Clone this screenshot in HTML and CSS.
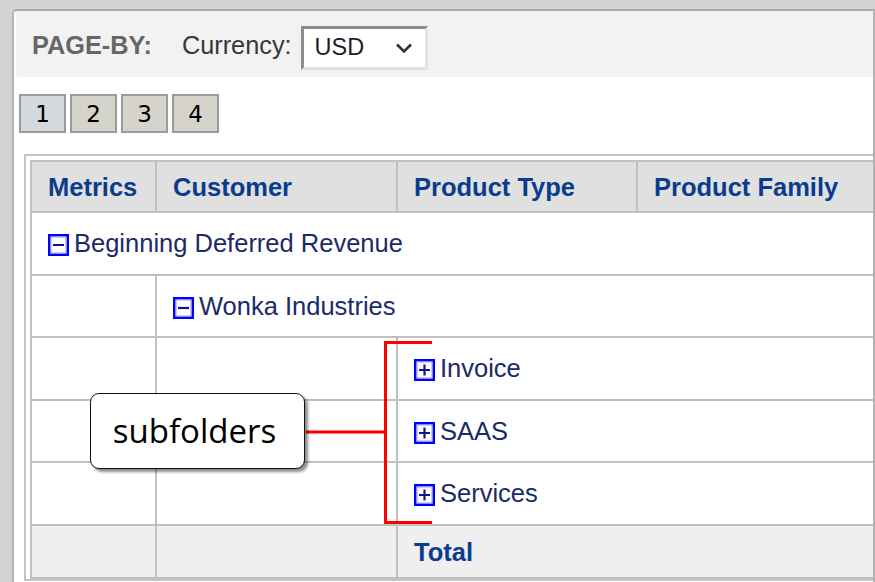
FILE: index.html
```html
<!DOCTYPE html>
<html>
<head>
<meta charset="utf-8">
<link rel="stylesheet" href="styles.css">
</head>
<body>
<div class="frame">
  <div class="pageby">
    <span class="pb-label">PAGE-BY:</span>
    <span class="pb-field">Currency:</span>
    <div class="select">
      <span class="select-value">USD</span>
      <svg class="chev" width="18" height="12" viewBox="0 0 18 12"><path d="M2 2.5 L9 9.5 L16 2.5" fill="none" stroke="#333" stroke-width="2.6"/></svg>
    </div>
  </div>

  <div class="pages">
    <span class="page page-active">1</span>
    <span class="page">2</span>
    <span class="page">3</span>
    <span class="page">4</span>
  </div>

  <div class="grid-wrap">
    <table class="grid">
      <thead>
        <tr class="r-head">
          <th class="c-metrics">Metrics</th>
          <th class="c-customer">Customer</th>
          <th class="c-ptype">Product Type</th>
          <th class="c-pfam">Product Family</th>
        </tr>
      </thead>
      <tbody>
        <tr class="r-a">
          <td colspan="4"><svg class="tog" width="21" height="22" viewBox="0 0 21 22"><rect x="1.25" y="1.25" width="18.5" height="19.5" fill="#fff" stroke="#0000ff" stroke-width="2.5"/><rect x="3" y="3" width="15" height="16" fill="none" stroke="#9a9aff" stroke-width="1"/><path d="M5 11 H16" stroke="#14148c" stroke-width="2.2"/></svg>Beginning Deferred Revenue</td>
        </tr>
        <tr class="r-b">
          <td></td>
          <td colspan="3"><svg class="tog" width="21" height="22" viewBox="0 0 21 22"><rect x="1.25" y="1.25" width="18.5" height="19.5" fill="#fff" stroke="#0000ff" stroke-width="2.5"/><rect x="3" y="3" width="15" height="16" fill="none" stroke="#9a9aff" stroke-width="1"/><path d="M5 11 H16" stroke="#14148c" stroke-width="2.2"/></svg>Wonka Industries</td>
        </tr>
        <tr class="r-a">
          <td></td><td></td>
          <td colspan="2"><svg class="tog" width="21" height="22" viewBox="0 0 21 22"><rect x="1.25" y="1.25" width="18.5" height="19.5" fill="#fff" stroke="#0000ff" stroke-width="2.5"/><rect x="3" y="3" width="15" height="16" fill="none" stroke="#9a9aff" stroke-width="1"/><path d="M5 11 H16 M10.5 5.5 V16.5" stroke="#14148c" stroke-width="2.2"/></svg>Invoice</td>
        </tr>
        <tr class="r-b">
          <td></td><td></td>
          <td colspan="2"><svg class="tog" width="21" height="22" viewBox="0 0 21 22"><rect x="1.25" y="1.25" width="18.5" height="19.5" fill="#fff" stroke="#0000ff" stroke-width="2.5"/><rect x="3" y="3" width="15" height="16" fill="none" stroke="#9a9aff" stroke-width="1"/><path d="M5 11 H16 M10.5 5.5 V16.5" stroke="#14148c" stroke-width="2.2"/></svg>SAAS</td>
        </tr>
        <tr class="r-a">
          <td></td><td></td>
          <td colspan="2"><svg class="tog" width="21" height="22" viewBox="0 0 21 22"><rect x="1.25" y="1.25" width="18.5" height="19.5" fill="#fff" stroke="#0000ff" stroke-width="2.5"/><rect x="3" y="3" width="15" height="16" fill="none" stroke="#9a9aff" stroke-width="1"/><path d="M5 11 H16 M10.5 5.5 V16.5" stroke="#14148c" stroke-width="2.2"/></svg>Services</td>
        </tr>
        <tr class="r-total">
          <td></td><td></td>
          <td colspan="2" class="total">Total</td>
        </tr>
      </tbody>
    </table>
  </div>
</div>

<svg class="annot" width="875" height="582" viewBox="0 0 875 582">
  <path d="M432 342.5 H385.5 V522.5 H432" fill="none" stroke="#ff0000" stroke-width="3"/>
  <path d="M306 432 H385" fill="none" stroke="#ff0000" stroke-width="3"/>
</svg>
<div class="callout">subfolders</div>
</body>
</html>
```

FILE: styles.css
```css
html, body {
  margin: 0;
  padding: 0;
}
body {
  background: #d3d3d3;
  width: 875px;
  height: 582px;
  overflow: hidden;
  position: relative;
  font-family: "Liberation Sans", Arial, sans-serif;
}
.frame {
  margin: 9px 0 0 12px;
  height: 580px;
  background: #fff;
  border-top: 2px solid #a9a9a9;
  border-left: 2px solid #b3b3b3;
  border-right: 2px solid #b3b3b3;
  border-top-left-radius: 5px;
  overflow: hidden;
}
.pageby {
  margin-left: 2px;
  height: 66px;
  background: #f2f2f2;
  border-top-left-radius: 4px;
  border-bottom-left-radius: 3px;
  display: flex;
  align-items: center;
  padding-left: 16px;
  padding-top: 3px;
  box-sizing: border-box;
}
.pb-label {
  font-weight: bold;
  font-size: 25.3px;
  color: #666;
  margin-right: 30px;
}
.pb-field {
  font-size: 25.3px;
  color: #383838;
  margin-right: 9px;
}
.select {
  width: 127px;
  height: 44px;
  box-sizing: border-box;
  background: #fff;
  border-top: 3px solid #8c8c8c;
  border-left: 3px solid #8c8c8c;
  border-bottom: 3px solid #e2e2e2;
  border-right: 3px solid #e2e2e2;
  display: flex;
  align-items: center;
  padding-left: 11px;
  margin-top: 4px;
}
.select-value {
  font-size: 23.5px;
  color: #1c1c2c;
  flex: 1;
}
.chev {
  margin-right: 12px;
  margin-top: 1px;
}
.pages {
  display: flex;
  gap: 4px;
  margin: 17px 0 0 5px;
}
.page {
  width: 47px;
  height: 39px;
  box-sizing: border-box;
  border: 2px solid #9a9a9a;
  background: #d6d3cb;
  display: flex;
  align-items: center;
  justify-content: center;
  font-family: "DejaVu Sans", Verdana, sans-serif;
  font-size: 23px;
  color: #000;
}
.page-active {
  background: #d5d8dc;
}
.grid-wrap {
  margin: 21px 0 0 10px;
  border: 2px solid #c4c4c4;
  border-right: none;
  padding: 4px 0 0 4px;
  width: 900px;
}
.grid {
  border-collapse: separate;
  border-spacing: 0;
  table-layout: fixed;
  width: 890px;
  border-top: 2px solid #c0c0c0;
  border-left: 2px solid #c0c0c0;
}
.grid th, .grid td {
  box-sizing: border-box;
  border-right: 2px solid #c0c0c0;
  border-bottom: 2px solid #c0c0c0;
  padding: 0 0 0 16px;
  text-align: left;
  vertical-align: middle;
  font-size: 25.5px;
  white-space: nowrap;
}
.grid th {
  background: #e0e0e0;
  color: #0a3c8e;
  font-weight: bold;
  padding-top: 1px;
}
.grid td {
  color: #1b2a68;
  background: #fff;
}
.c-metrics { width: 125px; }
.c-customer { width: 241px; }
.c-ptype { width: 240px; }
.c-pfam { width: 284px; }
.r-head { height: 51px; }
.r-a { height: 63px; }
.r-b { height: 62px; }
.r-total { height: 53px; }
.r-total td {
  background: #efefef;
  padding-top: 2px;
}
.grid td.total {
  font-weight: bold;
  color: #0a3c8e;
}
.tog {
  vertical-align: -4px;
  margin-right: 5px;
}
.annot {
  position: absolute;
  left: 0;
  top: 0;
  pointer-events: none;
}
.callout {
  position: absolute;
  left: 90px;
  top: 393px;
  width: 215px;
  height: 76px;
  box-sizing: border-box;
  border: 1.5px solid #111;
  border-radius: 9px;
  background: #fff;
  box-shadow: 3px 3px 3px rgba(0, 0, 0, 0.45);
  display: flex;
  align-items: center;
  justify-content: center;
  font-family: "Open Sans", "Noto Sans", sans-serif;
  font-size: 33px;
  color: #000;
  padding-right: 6px;
  padding-bottom: 2px;
}
```
